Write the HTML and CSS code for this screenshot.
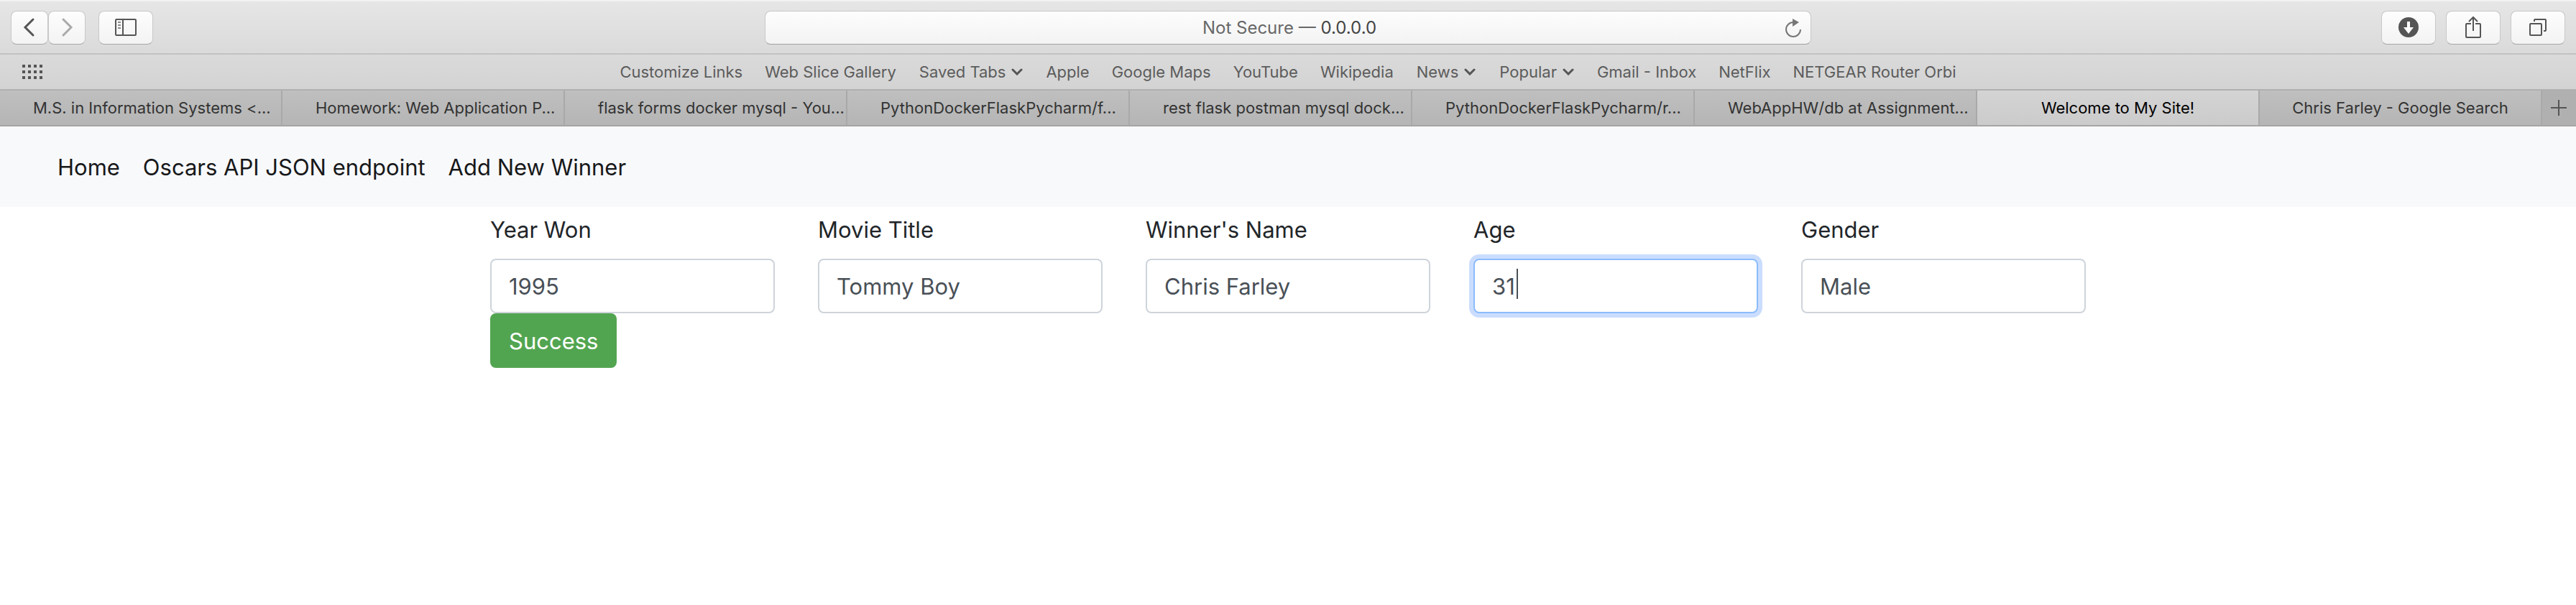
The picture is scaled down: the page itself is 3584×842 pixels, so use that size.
FILE: index.html
```html
<!DOCTYPE html>
<html lang="en">
<head>
<meta charset="utf-8">
<title>Welcome to My Site!</title>
<link rel="stylesheet" href="styles.css">
</head>
<body>
<header class="browser">
  <div class="toolbar">
    <div class="tools">
      <div class="history">
        <button class="tool tool-narrow" aria-label="Back"><svg width="30" height="30" viewBox="0 0 30 30"><path d="M20 4 9 15 20 26"/></svg></button>
        <button class="tool tool-narrow tool-off" aria-label="Forward"><svg width="30" height="30" viewBox="0 0 30 30"><path d="M10 4 21 15 10 26"/></svg></button>
      </div>
      <button class="tool" aria-label="Show sidebar"><svg class="thin" width="32" height="26" viewBox="0 0 32 26"><rect x="2" y="2" width="28" height="22" rx="1"/><path d="M12 2v22"/><path class="faint" d="M5 6h4M5 10h4M5 14h4"/></svg></button>
    </div>
    <div class="address">
      <span class="address-text">Not Secure — <span class="host">0.0.0.0</span></span>
      <button class="reload" aria-label="Reload"><svg width="24" height="28" viewBox="0 0 24 28"><path d="M12 6A10 10 0 1 0 22 16" /><path class="solid" d="M11 1l9 5-9 6z"/></svg></button>
    </div>
    <div class="tools tools-end">
      <button class="tool" aria-label="Downloads"><svg width="30" height="30" viewBox="0 0 30 30"><circle class="solid" cx="15" cy="15" r="14"/><path class="cut" d="M13 7h4v8h5l-7 9-7-9h5z"/></svg></button>
      <button class="tool" aria-label="Share"><svg class="thin" width="24" height="32" viewBox="0 0 24 32"><path d="M9 11H3a1 1 0 0 0-1 1v17a1 1 0 0 0 1 1h18a1 1 0 0 0 1-1V12a1 1 0 0 0-1-1h-6M12 21V2M6 8l6-6 6 6"/></svg></button>
      <button class="tool" aria-label="Show all tabs"><svg class="thin" width="26" height="26" viewBox="0 0 26 26"><rect x="2" y="8" width="16" height="16" rx="1"/><path d="M8 5V3a1 1 0 0 1 1-1h14a1 1 0 0 1 1 1v14a1 1 0 0 1-1 1h-2"/></svg></button>
    </div>
  </div>
  <nav class="bookmarks" aria-label="Favorites">
    <button class="grid-button" aria-label="Show favorites"><svg width="28" height="20" viewBox="0 0 28 20"><path d="M2 0v20M10 0v20M18 0v20M26 0v20"/></svg></button>
    <a href="#">Customize Links</a>
    <a href="#">Web Slice Gallery</a>
    <a class="menu" href="#">Saved Tabs <svg width="16" height="10" viewBox="0 0 16 10"><path d="M2 2l6 6 6-6"/></svg></a>
    <a href="#">Apple</a>
    <a href="#">Google Maps</a>
    <a href="#">YouTube</a>
    <a href="#">Wikipedia</a>
    <a class="menu" href="#">News <svg width="16" height="10" viewBox="0 0 16 10"><path d="M2 2l6 6 6-6"/></svg></a>
    <a class="menu" href="#">Popular <svg width="16" height="10" viewBox="0 0 16 10"><path d="M2 2l6 6 6-6"/></svg></a>
    <a href="#">Gmail - Inbox</a>
    <a href="#">NetFlix</a>
    <a href="#">NETGEAR Router Orbi</a>
  </nav>
  <div class="tabs">
    <a class="tab" href="#">M.S. in Information Systems &lt;...</a>
    <a class="tab" href="#">Homework: Web Application P...</a>
    <a class="tab" href="#">flask forms docker mysql - You...</a>
    <a class="tab" href="#">PythonDockerFlaskPycharm/f...</a>
    <a class="tab" href="#">rest flask postman mysql dock...</a>
    <a class="tab" href="#">PythonDockerFlaskPycharm/r...</a>
    <a class="tab" href="#">WebAppHW/db at Assignment...</a>
    <a class="tab tab-short tab-active" href="#" aria-current="page">Welcome to My Site!</a>
    <a class="tab tab-short" href="#">Chris Farley - Google Search</a>
    <button class="new-tab" aria-label="New tab"><svg width="22" height="22" viewBox="0 0 22 22"><path d="M11 0v22M0 11h22"/></svg></button>
  </div>
</header>
<nav class="site-nav" aria-label="Site">
  <a href="#">Home</a>
  <a href="#">Oscars API JSON endpoint</a>
  <a href="#">Add New Winner</a>
</nav>
<main class="container">
  <form>
    <div class="fields">
      <div class="field"><label for="year">Year Won</label><input id="year" type="text" value="1995"></div>
      <div class="field"><label for="title">Movie Title</label><input id="title" type="text" value="Tommy Boy"></div>
      <div class="field"><label for="name">Winner's Name</label><input id="name" type="text" value="Chris Farley"></div>
      <div class="field field-focus"><label for="age">Age</label><input id="age" type="text" value="31"><span class="caret"></span></div>
      <div class="field"><label for="gender">Gender</label><input id="gender" type="text" value="Male"></div>
    </div>
    <button class="submit" type="button">Success</button>
  </form>
</main>
</body>
</html>
```
FILE: styles.css
```css
* { box-sizing: border-box; }
body { margin: 0; background: #fff; color: #212529; font-family: Inter, Roboto, sans-serif; font-size: 31px; line-height: 48px; }
a { color: inherit; text-decoration: none; }
button, input { font: inherit; margin: 0; }
svg { display: block; fill: none; stroke: #555; stroke-width: 3; stroke-linecap: round; }
.thin { stroke-width: 2; stroke-linecap: butt; }
.solid { fill: #555; stroke: none; }

.browser { font-size: 22px; line-height: 28px; }
.toolbar {
  display: grid; grid-template-columns: 1fr minmax(0, 1456px) 1fr; align-items: center;
  height: 76px; padding: 0 15px; border-top: 2px solid #f2f2f2; border-bottom: 2px solid #c2c2c2;
  background: linear-gradient(#e6e6e6, #dadada);
}
.tools { display: flex; gap: 18px; }
.tools-end { justify-content: flex-end; gap: 14px; }
.history { display: flex; }
.tool {
  display: flex; align-items: center; justify-content: center; width: 76px; height: 47px; padding: 0;
  border: 1px solid #c8c8c8; border-bottom-color: #a8a8a8; border-radius: 8px;
  background: linear-gradient(#fdfdfd, #f3f3f3);
}
.tool-narrow { width: 52px; }
.tool-off svg { stroke: #aaa; }
.faint { stroke: #888; }
.cut { fill: #fff; stroke: none; }
.address {
  display: flex; align-items: center; height: 47px; padding: 2px 12px 0 40px;
  border: 1px solid #c8c8c8; border-bottom-color: #a0a0a0; border-radius: 8px;
  background: linear-gradient(#fdfdfd, #f3f3f3);
}
.address-text { flex: 1; text-align: center; color: #686868; font-size: 24px; }
.host { color: #444; }
.reload { padding: 0; border: 0; background: none; }
.reload svg { stroke: #777; stroke-width: 2; stroke-linecap: butt; }
.reload .solid { fill: #777; stroke: none; }

.bookmarks {
  position: relative; display: flex; align-items: center; justify-content: center; gap: 31px;
  height: 50px; border-bottom: 2px solid #b0b0b0;
  background: linear-gradient(#dadada, #d3d3d3); color: #5c5c5c;
}
.menu { display: flex; align-items: center; gap: 8px; padding: 0 1px; }
.grid-button { position: absolute; left: 31px; padding: 0; border: 0; background: none; }
.grid-button path { stroke-width: 4; stroke-dasharray: 4 4; stroke-linecap: butt; }

.tabs {
  display: grid; grid-template-columns: repeat(9, minmax(0, 1fr)) 47px; height: 50px;
  background: linear-gradient(#bfbfbf, #b5b5b5); border-bottom: 2px solid #a5a5a5; color: #333;
}
.tab {
  display: flex; align-items: center; padding-left: 46px;
  border-right: 2px solid #a9a9a9; white-space: nowrap; overflow: hidden;
}
.tab-short { justify-content: center; padding: 0; }
.tab-active { background: linear-gradient(#d4d4d4, #cbcbcb); color: #000; }
.new-tab { padding: 0 0 0 12px; border: 0; background: #b0b0b0; }
.new-tab svg { stroke-width: 2; stroke-linecap: butt; }

.site-nav { display: flex; align-items: center; gap: 32px; height: 112px; padding: 2px 80px 0; background: #f8f9fb; color: #17181a; }
.container { max-width: 2280px; margin: 0 auto; padding: 8px 30px; }
.fields { display: grid; grid-template-columns: repeat(5, minmax(0, 1fr)); gap: 60px; }
.field { position: relative; display: flex; flex-direction: column; gap: 16px; }
.field input {
  width: 100%; height: 76px; padding: 12px 24px; border: 2px solid #ced4da; border-radius: 8px;
  background: #fff; color: #495057; outline: 0;
}
.field-focus input { border-color: #8bbcfc; box-shadow: 0 0 0 6px #cbddfe; }
.caret { position: absolute; left: 60px; bottom: 20px; width: 2px; height: 42px; background: #495057; }
.submit { display: block; height: 76px; padding: 14px 26px 12px; border: 0; border-radius: 8px; background: #52a550; color: #fff; }
```
